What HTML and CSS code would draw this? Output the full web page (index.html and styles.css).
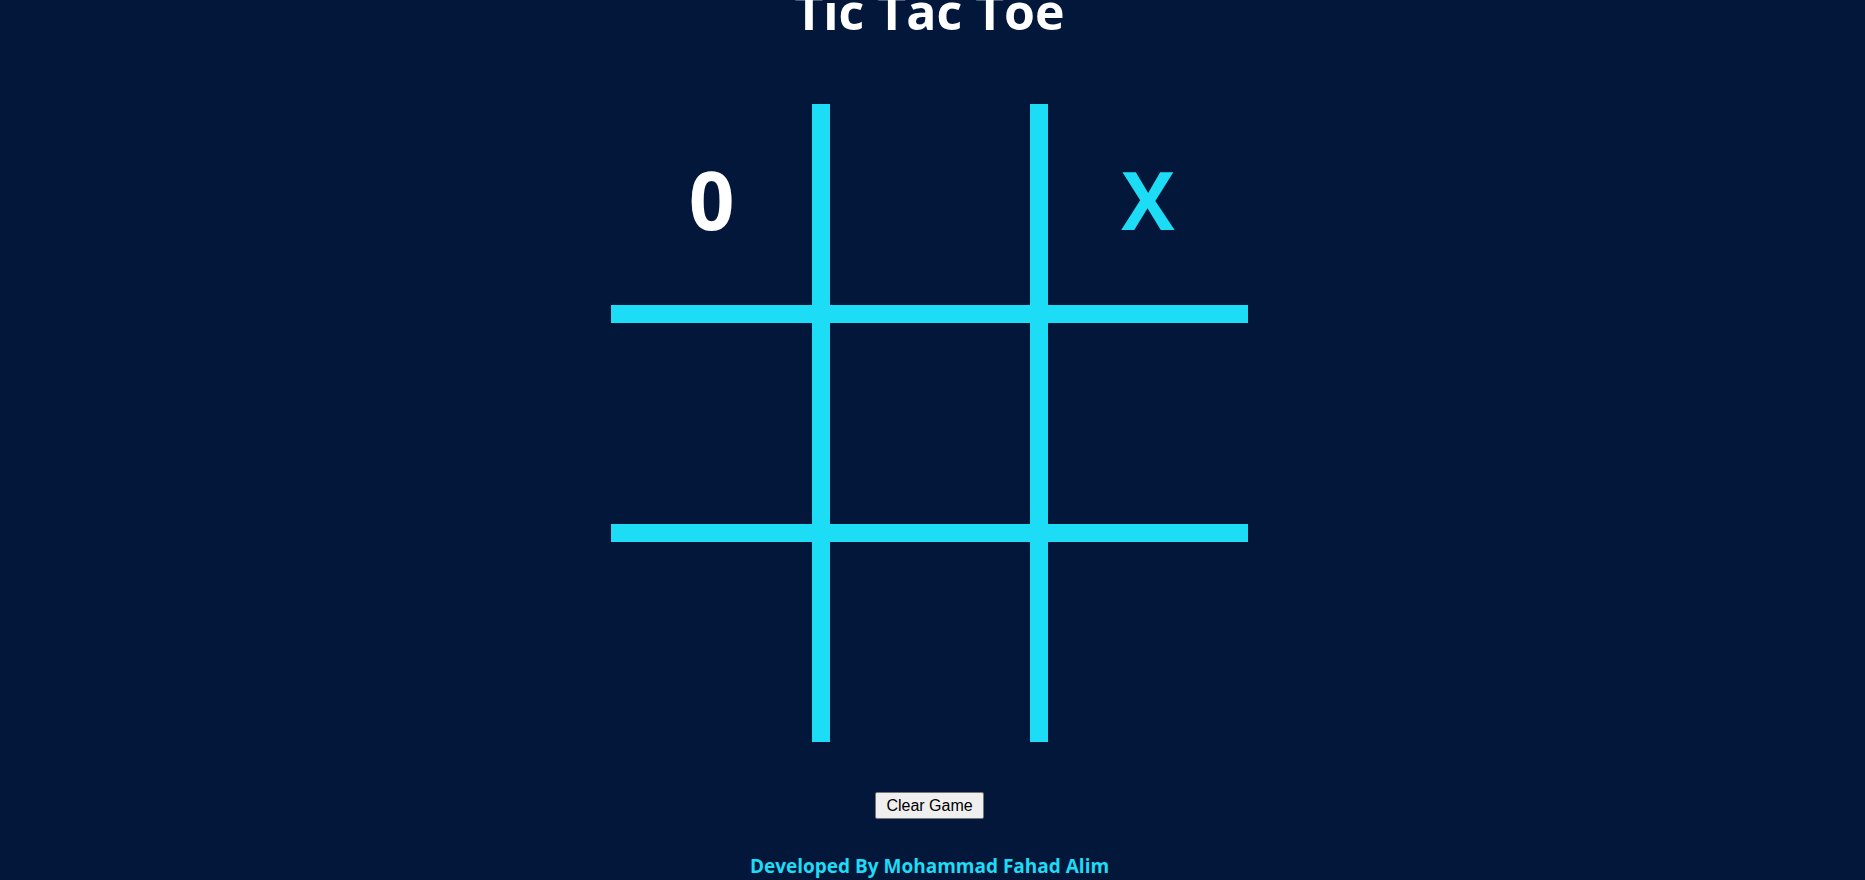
FILE: index.html
```html
<!DOCTYPE html>
<html lang="en">
<head>
<meta charset="utf-8">
<title>Tic Tac Toe</title>
<link rel="stylesheet" href="styles.css">
</head>
<body>
<main class="page">
  <h1 class="title">Tic Tac Toe</h1>
  <div class="board">
    <div class="cell cell-o">0</div>
    <div class="cell"></div>
    <div class="cell cell-x">X</div>
    <div class="cell"></div>
    <div class="cell"></div>
    <div class="cell"></div>
    <div class="cell"></div>
    <div class="cell"></div>
    <div class="cell"></div>
  </div>
  <button class="clear-btn" type="button">Clear Game</button>
  <p class="credit">Developed By Mohammad Fahad Alim</p>
</main>
</body>
</html>
```

FILE: styles.css
```css
html, body {
  margin: 0;
  padding: 0;
  background: #03173a;
  height: 100%;
  overflow: hidden;
}

.page {
  display: flex;
  flex-direction: column;
  align-items: center;
  padding-right: 6px;
  font-family: "Open Sans", "Noto Sans", sans-serif;
}

.title {
  margin: -14px 0 68px;
  font-size: 50px;
  line-height: 50px;
  font-weight: 700;
  color: #ffffff;
}

.board {
  display: grid;
  grid-template-columns: 201px 200px 200px;
  grid-template-rows: 201px 201px 200px;
  gap: 18px;
  background: #1ddcf5;
}

.cell {
  background: #03173a;
  display: flex;
  align-items: center;
  justify-content: center;
  padding-bottom: 12px;
  font-size: 80px;
  font-weight: 700;
  line-height: 1;
}

.cell-o {
  color: #ffffff;
}

.cell-x {
  color: #1ddcf5;
}

.clear-btn {
  margin-top: 50px;
  height: 27px;
  padding: 0 10px;
  font-family: "Liberation Sans", Arial, sans-serif;
  font-size: 16px;
  color: #000000;
  background: #efefef;
  border: 1px solid #767676;
  border-radius: 2px;
}

.credit {
  margin: 35px 0 0;
  font-size: 19px;
  line-height: 24px;
  font-weight: 700;
  color: #1ddcf5;
}
```
